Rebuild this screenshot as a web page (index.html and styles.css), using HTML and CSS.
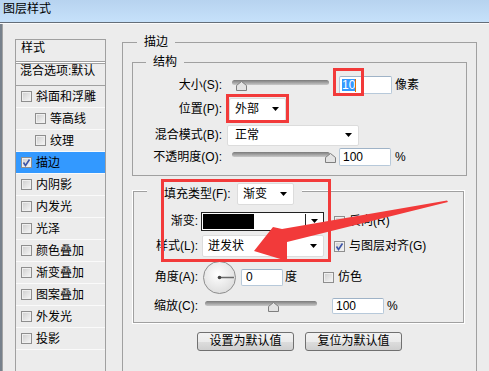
FILE: index.html
```html
<!DOCTYPE html>
<html lang="zh-CN">
<head>
  <meta charset="UTF-8">
  <meta name="viewport" content="width=device-width, initial-scale=1.0">
  <title>图层样式</title>
  <link rel="stylesheet" href="styles.css">
</head>
<body>

  <header class="titlebar">图层样式</header>

  <div class="dialog">
    <ul class="style-list">
      <li class="list-head">样式</li>
      <li class="list-blend">混合选项:默认</li>
      <li class="item"><span class="check"></span>斜面和浮雕</li>
      <li class="item sub"><span class="check"></span>等高线</li>
      <li class="item sub"><span class="check"></span>纹理</li>
      <li class="item selected"><span class="check"><svg class="tick" width="9" height="9" viewBox="0 0 9 9"><path d="M1.5 4.5 L3.5 7.5 L7.5 1.5"/></svg></span>描边</li>
      <li class="item"><span class="check"></span>内阴影</li>
      <li class="item"><span class="check"></span>内发光</li>
      <li class="item"><span class="check"></span>光泽</li>
      <li class="item"><span class="check"></span>颜色叠加</li>
      <li class="item"><span class="check"></span>渐变叠加</li>
      <li class="item"><span class="check"></span>图案叠加</li>
      <li class="item"><span class="check"></span>外发光</li>
      <li class="item"><span class="check"></span>投影</li>
    </ul>

    <section class="group stroke">
      <div class="group-title">描边</div>

      <div class="group struct">
        <div class="group-title">结构</div>
        <div class="form struct-form">
          <label>大小(S):</label>
          <div class="ctrl">
            <div class="slider size-slider">
              <div class="track"></div>
              <div class="thumb" style="left: 4px"><svg width="11" height="10" viewBox="0 0 11 10"><path d="M5.5 0.5 L10.5 4.5 V9.5 H0.5 V4.5 Z"/></svg></div>
            </div>
            <div class="num size-num"><span class="sel">10</span><span class="caret"></span></div>
            <span class="unit">像素</span>
          </div>

          <label>位置(P):</label>
          <div class="ctrl">
            <div class="select pos-select">外部<svg class="arrow" width="7" height="4" viewBox="0 0 7 4"><path d="M0 0H7L3.5 4Z"/></svg></div>
          </div>

          <label>混合模式(B):</label>
          <div class="ctrl">
            <div class="select mode-select">正常<svg class="arrow" width="7" height="4" viewBox="0 0 7 4"><path d="M0 0H7L3.5 4Z"/></svg></div>
          </div>

          <label>不透明度(O):</label>
          <div class="ctrl">
            <div class="slider opacity-slider">
              <div class="track"></div>
              <div class="thumb" style="left: 93px"><svg width="11" height="10" viewBox="0 0 11 10"><path d="M5.5 0.5 L10.5 4.5 V9.5 H0.5 V4.5 Z"/></svg></div>
            </div>
            <div class="num opacity-num">100</div>
            <span class="unit pct">%</span>
          </div>
        </div>
      </div>

      <div class="group fill">
        <div class="fill-legend">
          <label>填充类型(F):</label>
          <div class="select fill-select">渐变<svg class="arrow" width="7" height="4" viewBox="0 0 7 4"><path d="M0 0H7L3.5 4Z"/></svg></div>
        </div>
        <div class="form fill-form">
          <label>渐变:</label>
          <div class="ctrl">
            <div class="swatch">
              <span class="swatch-black"></span>
              <span class="swatch-white"></span>
              <span class="swatch-btn"><svg width="7" height="4" viewBox="0 0 7 4"><path d="M0 0H7L3.5 4Z"/></svg></span>
            </div>
            <span class="opt opt-reverse"><span class="check"></span>反向(R)</span>
          </div>

          <label>样式(L):</label>
          <div class="ctrl">
            <div class="select style-select">迸发状<svg class="arrow" width="7" height="4" viewBox="0 0 7 4"><path d="M0 0H7L3.5 4Z"/></svg></div>
            <span class="opt opt-align"><span class="check"><svg class="tick" width="9" height="9" viewBox="0 0 9 9"><path d="M1.5 4.5 L3.5 7.5 L7.5 1.5"/></svg></span>与图层对齐(G)</span>
          </div>

          <label>角度(A):</label>
          <div class="ctrl">
            <svg class="dial" width="33" height="33" viewBox="0 0 33 33">
              <defs>
                <radialGradient id="dialFill" cx="0.45" cy="0.4" r="0.6">
                  <stop offset="0" stop-color="#ffffff"/>
                  <stop offset="1" stop-color="#dedede"/>
                </radialGradient>
              </defs>
              <circle cx="16.5" cy="16.5" r="16" fill="url(#dialFill)" stroke="#8d8d8d"/>
              <line x1="16.5" y1="16.5" x2="31" y2="16.5" stroke="#6a6a6a" stroke-width="1.5"/>
              <circle cx="16.5" cy="16.5" r="1.8" fill="#444"/>
            </svg>
            <div class="num angle-num">0</div>
            <span class="unit deg">度</span>
            <span class="opt opt-dither"><span class="check"></span>仿色</span>
          </div>

          <label>缩放(C):</label>
          <div class="ctrl">
            <div class="slider scale-slider">
              <div class="track"></div>
              <div class="thumb" style="left: 63px"><svg width="11" height="10" viewBox="0 0 11 10"><path d="M5.5 0.5 L10.5 4.5 V9.5 H0.5 V4.5 Z"/></svg></div>
            </div>
            <div class="num scale-num">100</div>
            <span class="unit scale-pct">%</span>
          </div>
        </div>
      </div>

      <div class="buttons">
        <button class="btn">设置为默认值</button>
        <button class="btn">复位为默认值</button>
      </div>
    </section>
  </div>

  <svg class="marks" width="489" height="371" viewBox="0 0 489 371">
    <g fill="none" stroke="#f23a3a" stroke-width="3">
      <rect x="334.5" y="69.5" width="28" height="25"/>
      <rect x="227.5" y="95.5" width="60" height="26"/>
      <rect x="162.5" y="180.5" width="167" height="80"/>
    </g>
    <polygon fill="#f23a3a" points="447,200.5 282,229 273,227 254,251 287,261 287,242 448,202"/>
  </svg>

</body>
</html>
```

FILE: styles.css
```css
* {
  box-sizing: border-box;
}
body {
  margin: 0;
  width: 489px;
  height: 371px;
  overflow: hidden;
  position: relative;
  background-color: #ececec;
  font-family: "Liberation Sans", "Noto Sans CJK SC", sans-serif;
  font-size: 12px;
  line-height: 14px;
  color: #000;
}
.titlebar {
  height: 23px;
  padding: 2px 0 0 3px;
  background: linear-gradient(#b7d3ef, #c6e1fa);
  border-bottom: 1px solid #646e79;
}
.dialog {
  display: flex;
  align-items: flex-start;
  height: 348px;
  padding-left: 15px;
  border-top: 1px solid #fafafa;
  box-shadow: inset 2px 0 0 #77818c, inset 3px 0 0 #a3a3a3;
}

/* left list */
.style-list {
  list-style: none;
  margin: 15px 0 0 0;
  padding: 0;
  width: 91px;
  height: 340px;
  border: 1px solid #a0a0a0;
  border-bottom: none;
  flex: none;
}
.list-head {
  height: 22px;
  padding: 1px 0 0 5px;
  border-bottom: 1px solid #a0a0a0;
  box-shadow: 0 1px 0 #fff;
}
.list-blend {
  height: 23px;
  margin-top: 1px;
  padding: 0 0 0 4px;
  border-top: 1px solid #a0a0a0;
  border-bottom: 1px solid #a0a0a0;
  white-space: nowrap;
  overflow: hidden;
}
.item {
  display: flex;
  align-items: center;
  gap: 4px;
  height: 22px;
  padding-left: 5px;
  border-bottom: 1px solid #fafafa;
}
.item.sub {
  padding-left: 19px;
}
.item.selected {
  background-color: #3399ff;
}
.check {
  flex: none;
  width: 11px;
  height: 11px;
  border: 1px solid #8e8e8e;
  background: linear-gradient(135deg, #cdcdcd, #f7f7f7);
  box-shadow: inset 0 0 0 1px #efefef;
}
.tick {
  display: block;
}
.tick path {
  fill: none;
  stroke: #3d55a8;
  stroke-width: 1.6;
}

/* group boxes */
.group {
  display: flex;
  flex-direction: column;
  border: 1px solid #a0a0a0;
}
.group-title {
  align-self: flex-start;
  margin-top: -8px;
  padding: 0 7px;
  background-color: #ececec;
}
.stroke {
  flex: none;
  width: 355px;
  height: 340px;
  margin: 18px 0 0 16px;
  padding: 0 9px;
  border-bottom: none;
}
.stroke > .group-title {
  margin-left: 5px;
}
.struct {
  margin-top: 13px;
  padding-bottom: 9px;
}
.struct > .group-title {
  margin-left: 13px;
}
.form {
  display: grid;
  align-items: center;
}
.form > label {
  text-align: right;
  white-space: nowrap;
}
.ctrl {
  display: flex;
  align-items: center;
  height: 100%;
}
.struct-form {
  grid-template-columns: 89px auto;
  grid-template-rows: 22px 26px 26px 18px;
  margin-top: 5px;
}

/* controls */
.slider {
  position: relative;
  height: 11px;
  flex: none;
}
.track {
  height: 5px;
  border-radius: 3px;
  background: linear-gradient(#7a7a7a, #c9c9c9);
}
.thumb {
  position: absolute;
  top: 1px;
  width: 11px;
  height: 10px;
}
.thumb svg {
  display: block;
}
.thumb path {
  fill: #e3e3e3;
  stroke: #7f7f7f;
}
.num {
  flex: none;
  height: 18px;
  padding: 0 3px;
  line-height: 16px;
  background-color: #fff;
  border: 1px solid #b7c9da;
  border-top-color: #9fb3c7;
  border-radius: 2px;
  display: flex;
  align-items: center;
}
.sel {
  background-color: #3399ff;
  color: #fff;
  line-height: 12px;
}
.caret {
  width: 1px;
  height: 13px;
  background-color: #e07000;
}
.select {
  flex: none;
  display: flex;
  align-items: center;
  justify-content: space-between;
  padding: 0 6px 0 5px;
  background-color: #fff;
  border: 1px solid #dcdcdc;
  border-radius: 2px;
}
.arrow {
  display: block;
}
.size-slider { width: 97px; margin-left: 10px; }
.size-num { width: 53px; margin-left: 10px; padding-left: 2px; }
.unit { margin-left: 3px; white-space: nowrap; }
.pos-select { width: 57px; height: 23px; margin-left: 7px; }
.mode-select { width: 132px; height: 21px; margin-left: 5px; padding-left: 7px; }
.opacity-slider { width: 98px; margin-left: 10px; }
.opacity-num { width: 52px; margin-left: 9px; }
.pct { margin-left: 4px; }

/* fill box */
.fill {
  margin: 15px 3px 0 1px;
  padding-bottom: 7px;
  box-shadow: 0 0 0 1px #fff;
}
.fill-legend {
  display: flex;
  align-items: center;
  align-self: flex-start;
  height: 22px;
  margin: -9px 0 0 13px;
  padding: 0 8px 0 17px;
  background-color: #ececec;
}
.fill-legend label {
  width: 73px;
  white-space: nowrap;
}
.fill-select { width: 57px; height: 22px; }
.fill-form {
  grid-template-columns: 64px auto;
  grid-template-rows: 22px 22px 34px 18px;
  row-gap: 3px;
  margin-top: 5px;
}
.swatch {
  flex: none;
  display: flex;
  width: 123px;
  height: 19px;
  margin-left: 3px;
  padding: 1px;
  border: 1px solid #222;
  background-color: #fff;
}
.swatch-black {
  width: 51px;
  background-color: #000;
}
.swatch-white {
  flex: 1;
}
.swatch-btn {
  width: 17px;
  border-left: 1px solid #222;
  display: flex;
  align-items: center;
  justify-content: center;
}
.swatch-btn svg {
  display: block;
}
.opt {
  display: flex;
  align-items: center;
  gap: 4px;
  white-space: nowrap;
}
.opt-reverse, .opt-align { margin-left: 10px; }
.style-select { width: 122px; height: 22px; margin-left: 4px; }
.dial { display: block; flex: none; margin-left: 5px; }
.angle-num { width: 42px; height: 17px; margin-left: 5px; padding-left: 4px; }
.deg { margin-left: 2px; }
.opt-dither { margin-left: 26px; }
.scale-slider { width: 112px; margin-left: 7px; }
.scale-num { width: 52px; height: 16px; margin-left: 15px; }
.scale-pct { margin-left: 3px; }

/* buttons */
.buttons {
  display: flex;
  justify-content: center;
  gap: 11px;
  margin-top: 9px;
}
.btn {
  width: 97px;
  height: 19px;
  padding: 0;
  font: inherit;
  line-height: 17px;
  color: #000;
  border: 1px solid #707070;
  border-radius: 3px;
  background: linear-gradient(#f2f2f2 0%, #ebebeb 50%, #dddddd 51%, #cfcfcf 100%);
}

/* annotations drawn over the dialog */
.marks {
  position: absolute;
  top: 0;
  left: 0;
  pointer-events: none;
}
```
